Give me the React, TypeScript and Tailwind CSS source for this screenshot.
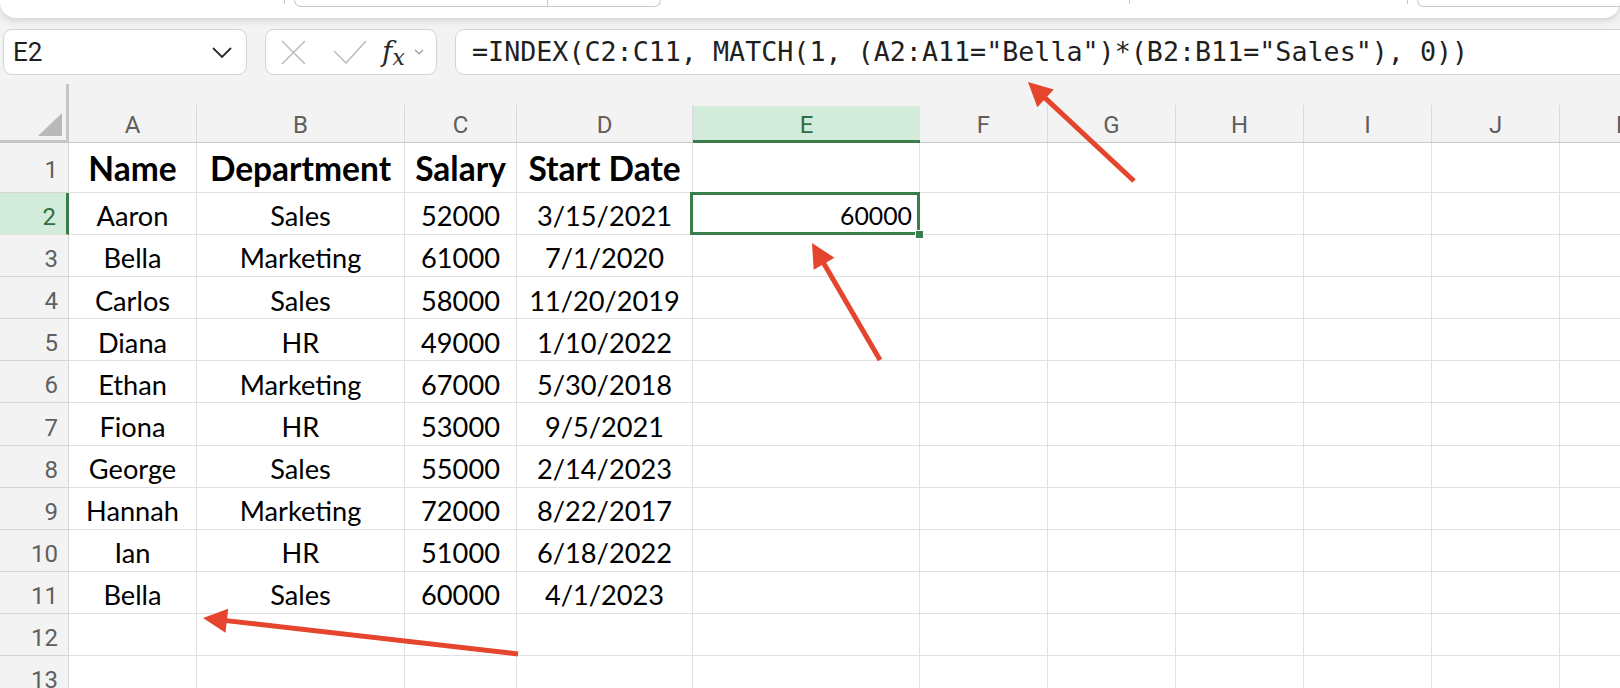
const GRID =
  'grid grid-cols-[69px_128px_208px_112px_176px_227px_128px_128px_128px_128px_128px_128px]'

const letters = ['A', 'B', 'C', 'D', 'E', 'F', 'G', 'H', 'I', 'J', 'K']

const data = [
  ['Aaron', 'Sales', '52000', '3/15/2021'],
  ['Bella', 'Marketing', '61000', '7/1/2020'],
  ['Carlos', 'Sales', '58000', '11/20/2019'],
  ['Diana', 'HR', '49000', '1/10/2022'],
  ['Ethan', 'Marketing', '67000', '5/30/2018'],
  ['Fiona', 'HR', '53000', '9/5/2021'],
  ['George', 'Sales', '55000', '2/14/2023'],
  ['Hannah', 'Marketing', '72000', '8/22/2017'],
  ['Ian', 'HR', '51000', '6/18/2022'],
  ['Bella', 'Sales', '60000', '4/1/2023'],
  ['', '', '', ''],
  ['', '', '', ''],
]

const Arrow = ({ x1, y1, x2, y2 }: { x1: number; y1: number; x2: number; y2: number }) => {
  const dx = x2 - x1
  const dy = y2 - y1
  const len = Math.hypot(dx, dy)
  const ux = dx / len
  const uy = dy / len
  const bx = x2 - ux * 24
  const by = y2 - uy * 24
  const px = -uy
  const py = ux
  return (
    <g>
      <line x1={x1} y1={y1} x2={bx + ux * 3} y2={by + uy * 3} stroke="#e4452c" strokeWidth={5} />
      <polygon
        points={`${x2},${y2} ${bx + px * 12},${by + py * 12} ${bx - px * 12},${by - py * 12}`}
        fill="#e4452c"
      />
    </g>
  )
}

const Cell = ({ text, bold }: { text: string; bold?: boolean }) => (
  <div
    className={
      'flex items-end justify-center border-r border-b border-[#e1e1e1] bg-white leading-none text-black ' +
      (bold ? 'pb-[7px] text-[33.5px] font-bold' : 'pb-[4.5px] text-[27.2px]')
    }
  >
    {text}
  </div>
)

export default function App() {
  return (
    <div className="relative h-[688px] w-[1620px] overflow-hidden bg-[#f3f3f3] font-['Lato',sans-serif]">
      {/* ribbon edge */}
      <div className="relative z-10 flex h-[18px] items-start rounded-b-[16px] bg-white shadow-[0_3px_6px_rgba(0,0,0,0.13)]">
        <div className="ml-[284px] h-[4px] w-px shrink-0 bg-[#c8c8c8]" />
        <div className="ml-[9px] flex h-[7px] w-[367px] shrink-0 rounded-b-[8px] border border-t-0 border-[#c8c8c8]">
          <div className="h-full w-[253px] border-r border-[#c8c8c8]" />
        </div>
        <div className="ml-[468px] h-[4px] w-px shrink-0 bg-[#c8c8c8]" />
        <div className="ml-[277px] h-[4px] w-px shrink-0 bg-[#c8c8c8]" />
        <div className="ml-[9px] h-[7px] flex-1 rounded-bl-[8px] border-b border-l border-[#c8c8c8]" />
      </div>

      {/* formula bar */}
      <div className="mt-[11px] flex h-[46px]">
        <div className="ml-[3px] flex w-[244px] shrink-0 items-center justify-between rounded-[9px] border-[1.5px] border-[#d4d4d4] bg-white pr-[14px] pl-[9px]">
          <span className="font-['Roboto',sans-serif] text-[26px] text-[#1f1f1f]">E2</span>
          <svg width="20" height="11" viewBox="0 0 20 11">
            <path d="M1 1 L10 10 L19 1" fill="none" stroke="#2b2b2b" strokeWidth="1.8" />
          </svg>
        </div>
        <div className="ml-[18px] flex w-[172px] shrink-0 items-center rounded-[9px] border-[1.5px] border-[#d4d4d4] bg-white pl-[15px]">
          <svg width="25" height="25" viewBox="0 0 25 25">
            <path d="M1 1 L24 24 M24 1 L1 24" stroke="#bdbdbd" strokeWidth="1.6" fill="none" />
          </svg>
          <svg width="34" height="24" viewBox="0 0 34 24" className="ml-[27px]">
            <path d="M1 11 L13 23 L33 1" stroke="#bdbdbd" strokeWidth="1.6" fill="none" />
          </svg>
          <span className="ml-[15px] flex items-end font-['DejaVu_Serif',serif] text-[#2b2b2b] italic">
            <span className="text-[28px] leading-none">f</span>
            <span className="translate-y-[3px] text-[22px] leading-none">x</span>
          </span>
          <svg width="10" height="6" viewBox="0 0 10 6" className="ml-[9px]">
            <path d="M1 1 L5 5 L9 1" fill="none" stroke="#9a9a9a" strokeWidth="1.2" />
          </svg>
        </div>
        <div className="ml-[18px] flex w-[1200px] shrink-0 items-center rounded-[9px] border-[1.5px] border-[#d4d4d4] bg-white pl-[16px]">
          <span className="font-['DejaVu_Sans_Mono',monospace] text-[26.7px] whitespace-pre text-[#1f1f1f]">
            =INDEX(C2:C11, MATCH(1, (A2:A11="Bella")*(B2:B11="Sales"), 0))
          </span>
        </div>
      </div>

      {/* column headers */}
      <div className={GRID + ' h-[68px] font-["Roboto",sans-serif]'}>
        <div className="flex flex-col">
          <div className="mt-[9px] flex flex-1 items-end justify-end border-r-[3px] border-b-[3px] border-[#c6c6c6] pr-[4px] pb-[4px]">
            <svg width="24" height="23" viewBox="0 0 24 23">
              <polygon points="24,0 24,23 0,23" fill="#b9b9b9" />
            </svg>
          </div>
        </div>
        {letters.map((l) => (
          <div key={l} className="flex flex-col justify-end border-b border-[#cbcbcb]">
            {l === 'E' ? (
              <div className="-mb-px flex h-[37px] items-end justify-center border-b-[3px] border-[#3b7c4b] bg-[#d3ebdb] pb-[3px] text-[24px] leading-none text-[#2f6f3e]">
                {l}
              </div>
            ) : (
              <div className="flex h-[37px] items-end justify-center border-r border-[#dadada] pb-[5px] text-[24px] leading-none text-[#5f5f5f]">
                {l}
              </div>
            )}
          </div>
        ))}
      </div>

      {/* rows */}
      <div className={GRID + ' h-[50px]'}>
        <div className="flex items-end justify-end border-r border-b border-[#d6d6d6] pr-[10px] pb-[10px] font-['Roboto',sans-serif] text-[24px] leading-none text-[#5f5f5f]">
          1
        </div>
        <Cell text="Name" bold />
        <Cell text="Department" bold />
        <Cell text="Salary" bold />
        <Cell text="Start Date" bold />
        {Array.from({ length: 7 }).map((_, i) => (
          <Cell key={i} text="" />
        ))}
      </div>

      {data.map((r, i) => {
        const n = i + 2
        const sel = n === 2
        return (
          <div key={n} className={GRID + ' h-[42.1px]'}>
            <div
              className={
                'flex items-end justify-end border-b pr-[10px] pb-[5px] font-["Roboto",sans-serif] text-[24px] leading-none ' +
                (sel
                  ? 'border-r-[3px] border-[#e1e1e1] border-r-[#3b7c4b] bg-[#d3ebdb] text-[#2f6f3e]'
                  : 'border-r border-[#d6d6d6] text-[#5f5f5f]')
              }
            >
              {n}
            </div>
            {r.map((t, j) => (
              <Cell key={j} text={t} />
            ))}
            {sel ? (
              <div className="relative flex items-end justify-end border-r border-b border-[#e1e1e1] bg-white pr-[7px] pb-[5px] text-[24.8px] leading-none text-black">
                60000
                <div className="absolute -top-[1px] -right-[1px] -bottom-[1px] -left-[3px] border-[3px] border-[#3b7c4b]" />
                <div className="absolute -right-[5px] -bottom-[5px] h-[9px] w-[9px] border border-white bg-[#3b7c4b]" />
              </div>
            ) : (
              <Cell text="" />
            )}
            {Array.from({ length: 6 }).map((_, k) => (
              <Cell key={k} text="" />
            ))}
          </div>
        )
      })}

      {/* annotation arrows */}
      <svg className="pointer-events-none absolute inset-0" width="1620" height="688">
        <Arrow x1={1134} y1={181} x2={1028} y2={82} />
        <Arrow x1={880} y1={360} x2={812} y2={243} />
        <Arrow x1={518} y1={654} x2={203} y2={618} />
      </svg>
    </div>
  )
}
